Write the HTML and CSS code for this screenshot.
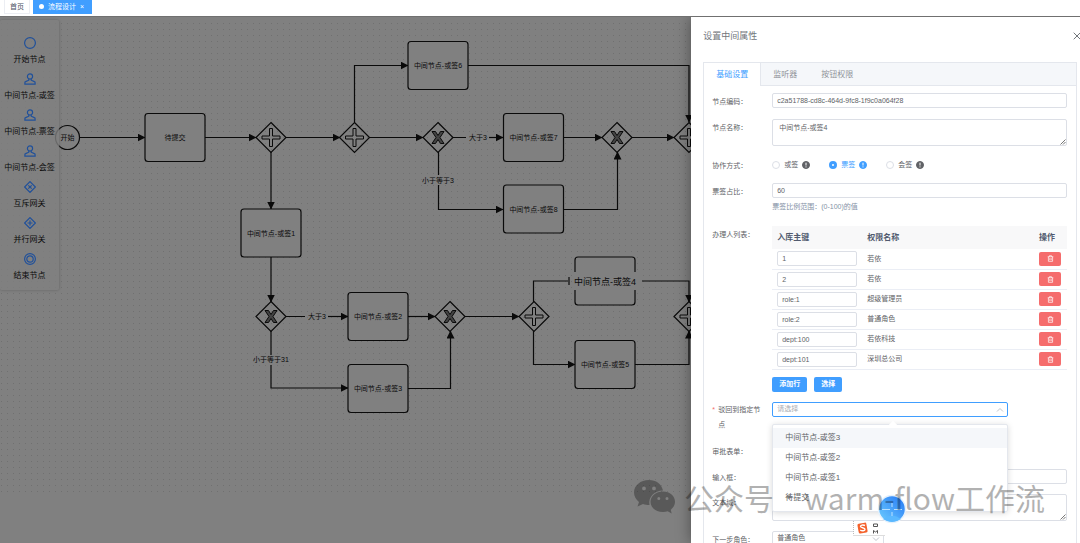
FILE: index.html
```html
<!DOCTYPE html>
<html lang="zh-CN">
<head>
<meta charset="utf-8">
<title>流程设计</title>
<link rel="stylesheet" href="styles.css">
</head>
<body>
<svg class="defs" width="0" height="0" aria-hidden="true">
  <defs>
    <symbol id="user" viewBox="0 0 12 12"><circle cx="6" cy="3.4" r="2.6"/><path d="M4.8 6v1.2L1.6 8.6a1 1 0 0 0-.7 1v1.6h10.200V9.600a1 1 0 0 0-.7-1L7.200 7.200V6"/></symbol>
    <symbol id="trash" viewBox="0 0 10 10"><path d="M1 2.500h8M3.500 2.500V1h3v1.500M2 2.500V9h6V2.500M4 4.500v2.800M6 4.500v2.800"/></symbol>
    <symbol id="grip" viewBox="0 0 6 6"><path d="M.5 5.500l5-5M3 5.500L5.500 3"/></symbol>
    <symbol id="chevron" viewBox="0 0 8 8"><path d="M1 2.500l3 3 3-3"/></symbol>
    <symbol id="info" viewBox="0 0 8 8"><circle cx="4" cy="4" r="3.500" fill="currentColor"/><path d="M4 1.700v2.800M4 5.400v1" stroke="#fff"/></symbol>
    <g id="plus"><path class="edge" d="M0-15L15 0 0 15-15 0z"/><path class="mark" d="M-1.500-9h3v7.500h7.500v3h-7.500V9h-3V1.500H-9v-3h7.500z"/></g>
    <g id="cross"><path class="edge" d="M0-15L15 0 0 15-15 0z"/><path class="mark solid" d="M-6-6h3.500L0-2 2.500-6H6L2 0l4 6H2.500L0 2l-2.500 4H-6l4-6z"/></g>
    <marker id="arrow" viewBox="0 0 8 8" refX="7.500" refY="4" markerWidth="8" markerHeight="8" markerUnits="userSpaceOnUse" orient="auto"><path d="M0 0l8 4-8 4z" fill="#0a0a0a" stroke="none"/></marker>
    <pattern id="dots" width="6" height="6" x="1" y="5" patternUnits="userSpaceOnUse"><rect width="1" height="1" fill="#707070" stroke="none"/></pattern>
    <linearGradient id="ball" x1="1" y1="0" x2="0" y2="1"><stop offset="0.200" stop-color="#3388f7"/><stop offset="1" stop-color="#6fd0ff"/></linearGradient>
  </defs>
</svg>

<nav class="tags">
  <a class="tag" href="#">首页</a>
  <a class="tag tag-active" href="#"><span class="dot"></span>流程设计<span class="tag-close">×</span></a>
</nav>

<main class="designer">
  <svg class="canvas" width="720" height="527" viewBox="0 16 720 527">
    <rect x="0" y="18" width="720" height="474" fill="url(#dots)"/>
    <g class="edge">
      <g marker-end="url(#arrow)">
        <path d="M80 137.500H145"/><path d="M205 137.500H256"/><path d="M286 137.500H340"/><path d="M370 137.500H423"/>
        <path d="M271 152V209"/><path d="M354.500 122V65.500H408"/><path d="M468 65.500H689V122"/>
        <path d="M489 137.500H503"/><path d="M438.500 185V209.500H503"/><path d="M563 137.500H602"/>
        <path d="M563 209.500H617.500V152"/><path d="M632 137.500H674"/><path d="M271 257V302"/>
        <path d="M328 316.500H348"/><path d="M271 365V388H348"/><path d="M408 316.500H435"/>
        <path d="M408 388.500H450.500V331"/><path d="M465 316.500H519"/><path d="M533.500 331V364.500H575"/>
        <path d="M635 364.500H689V331"/><path d="M642 281H689V302"/>
      </g>
      <path d="M453 137.500H466M438.500 152V175M286 316.500H305M271 331V355M533.500 302V281H568M569 277v8"/>
    </g>
    <g class="box">
      <circle cx="67.500" cy="137.500" r="12"/>
      <rect x="145" y="113.500" width="60" height="48" rx="3"/><rect x="408" y="41.500" width="60" height="48" rx="3"/>
      <rect x="503.500" y="113.500" width="60" height="48" rx="3"/><rect x="503.500" y="185" width="60" height="48" rx="3"/>
      <rect x="241" y="209" width="60" height="48" rx="3"/><rect x="348" y="292.500" width="60" height="48" rx="3"/>
      <rect x="348" y="364.500" width="60" height="48" rx="3"/><rect x="575" y="257" width="60" height="48" rx="3"/>
      <rect x="575" y="340.500" width="60" height="48" rx="3"/>
    </g>
    <use href="#plus" x="271" y="137.500"/><use href="#plus" x="354.500" y="137.500"/><use href="#cross" x="438" y="137.500"/>
    <use href="#cross" x="617" y="137.500"/><use href="#plus" x="689" y="137.500"/><use href="#cross" x="271" y="316.500"/>
    <use href="#cross" x="450" y="316.500"/><use href="#plus" x="534" y="316.500"/><use href="#plus" x="689" y="316.500"/>
    <rect x="572" y="272" width="69" height="18" fill="#808080"/>
    <g class="node-text">
      <text x="67.500" y="140">开始</text><text x="175" y="140">待提交</text><text x="438" y="68">中间节点-或签6</text>
      <text x="533.500" y="140">中间节点-或签7</text><text x="533.500" y="212">中间节点-或签8</text>
      <text x="271" y="236">中间节点-或签1</text><text x="378" y="319">中间节点-或签2</text>
      <text x="378" y="391">中间节点-或签3</text><text x="605" y="367">中间节点-或签5</text>
      <text x="478" y="140">大于3</text><text x="438" y="183">小于等于3</text><text x="317" y="319">大于3</text><text x="271" y="362">小于等于31</text>
      <text class="editing" x="605" y="285">中间节点-或签4</text>
    </g>
  </svg>

  <aside class="palette">
    <div class="shape"><svg viewBox="0 0 12 12"><circle cx="6" cy="6" r="5.400"/></svg>开始节点</div>
    <div class="shape"><svg><use href="#user"/></svg>中间节点-或签</div>
    <div class="shape"><svg><use href="#user"/></svg>中间节点-票签</div>
    <div class="shape"><svg><use href="#user"/></svg>中间节点-会签</div>
    <div class="shape"><svg viewBox="0 0 12 12"><path d="M6 .6L11.400 6 6 11.400.6 6zM4.300 4.300l3.400 3.400M7.700 4.300L4.300 7.700"/></svg>互斥网关</div>
    <div class="shape"><svg viewBox="0 0 12 12"><path d="M6 .6L11.400 6 6 11.400.6 6zM6 3.500v5M3.500 6h5"/></svg>并行网关</div>
    <div class="shape"><svg viewBox="0 0 12 12"><circle cx="6" cy="6" r="5.400"/><circle cx="6" cy="6" r="3.200"/></svg>结束节点</div>
  </aside>

  <section class="drawer">
    <header class="drawer-head">
      <h1>设置中间属性</h1>
      <button class="close" aria-label="关闭"><svg viewBox="0 0 8 8"><path d="M.7.7l6.600 6.600M7.300.7L.7 7.300"/></svg></button>
    </header>
    <div class="card">
      <div class="tabs">
        <button class="tab tab-active">基础设置</button><button class="tab">监听器</button><button class="tab">按钮权限</button>
      </div>
      <form class="form">
        <div class="row"><label for="code">节点编码：</label><div class="field"><input id="code" class="control" value="c2a51788-cd8c-464d-9fc8-1f9c0a064f28"></div></div>
        <div class="row"><label for="name">节点名称：</label><div class="field area"><textarea id="name" class="control">中间节点-或签4</textarea><svg class="grip"><use href="#grip"/></svg></div></div>
        <div class="row"><span class="label">协作方式：</span><div class="field radios">
          <label class="radio"><input type="radio" name="mode">或签<svg><use href="#info"/></svg></label>
          <label class="radio"><input type="radio" name="mode" checked>票签<svg><use href="#info"/></svg></label>
          <label class="radio"><input type="radio" name="mode">会签<svg><use href="#info"/></svg></label>
        </div></div>
        <div class="row"><label for="ratio">票签占比：</label><div class="field"><input id="ratio" class="control" value="60"><p class="hint">票签比例范围：(0-100)的值</p></div></div>
        <div class="row row-table"><span class="label">办理人列表：</span><div class="field">
          <table class="table">
            <thead><tr><th class="c-key">入库主键</th><th>权限名称</th><th class="c-op">操作</th></tr></thead>
            <tbody>
              <tr><td><input class="control" aria-label="入库主键" value="1"></td><td>若依</td><td><button type="button" class="del" aria-label="删除"><svg><use href="#trash"/></svg></button></td></tr>
              <tr><td><input class="control" aria-label="入库主键" value="2"></td><td>若依</td><td><button type="button" class="del" aria-label="删除"><svg><use href="#trash"/></svg></button></td></tr>
              <tr><td><input class="control" aria-label="入库主键" value="role:1"></td><td>超级管理员</td><td><button type="button" class="del" aria-label="删除"><svg><use href="#trash"/></svg></button></td></tr>
              <tr><td><input class="control" aria-label="入库主键" value="role:2"></td><td>普通角色</td><td><button type="button" class="del" aria-label="删除"><svg><use href="#trash"/></svg></button></td></tr>
              <tr><td><input class="control" aria-label="入库主键" value="dept:100"></td><td>若依科技</td><td><button type="button" class="del" aria-label="删除"><svg><use href="#trash"/></svg></button></td></tr>
              <tr><td><input class="control" aria-label="入库主键" value="dept:101"></td><td>深圳总公司</td><td><button type="button" class="del" aria-label="删除"><svg><use href="#trash"/></svg></button></td></tr>
            </tbody>
          </table>
          <div class="actions"><button type="button" class="btn">添加行</button><button type="button" class="btn">选择</button></div>
        </div></div>
        <div class="row row-tight row-back"><label class="required" for="back">驳回到指定节点</label><div class="field">
          <div class="select select-open">
            <select id="back" class="control"><option>请选择</option></select><svg class="chevron"><use href="#chevron"/></svg>
            <ul class="menu"><li class="hover">中间节点-或签3</li><li>中间节点-或签2</li><li>中间节点-或签1</li><li>待提交</li></ul>
          </div>
        </div></div>
        <div class="row"><span class="label">审批表单：</span></div>
        <div class="row"><label for="line">输入框：</label><div class="field"><input id="line" class="control"></div></div>
        <div class="row row-tight"><label for="text">文本域：</label><div class="field area"><textarea id="text" class="control"></textarea><svg class="grip"><use href="#grip"/></svg></div></div>
        <div class="row row-tight"><label for="next">下一步角色：</label><div class="field">
          <div class="select select-small"><select id="next" class="control"><option>普通角色</option></select><svg class="chevron"><use href="#chevron"/></svg></div>
        </div></div>
      </form>
    </div>
  </section>

  <svg class="ime" viewBox="0 0 34 15"><g stroke="none"><rect width="34" height="15" fill="#fff"/><rect x="5" y="2" width="9" height="10" rx="1.500" fill="#f4622c" transform="rotate(-10 10 7)"/></g><path d="M.5 0v14" stroke="#bbb" stroke-dasharray="1 1"/><path d="M0 14.500h32" stroke="#ddd"/><path d="M12 4.500c-2-1-4.500-.5-4.500 1s4.500 1 4.500 2.700-3 2-4.800.8" stroke="#fff" stroke-width="1.400"/><path d="M20.500 3h4v2.500h-4zM20.500 12.500V9.500l2 1.500 2-1.500v3" stroke="#555"/></svg>
  <svg class="ball" viewBox="0 0 30 30"><circle cx="15" cy="15" r="13.500" fill="url(#ball)" stroke="#e4f1fd" stroke-width="1.500"/><path d="M6 25q9-7 18 0-9 6-18 0z" fill="#5ab8ff" stroke="none"/><path d="M5 15.500h8M17 15.500h8M15 9v4M15 18v4" stroke="#b9e0ff"/></svg>

  <div class="watermark">
    <svg viewBox="0 0 42 34"><path fill-rule="evenodd" d="M15 0C6.500 0 0 5.500 0 12.500c0 4 2 7 5 9.500l-1.500 4.500L9 24c2 .7 4 1 6.500 1-1.500-8 5-14.500 13.500-14.500C27.500 4 22 0 15 0zM10 6.500a1.900 1.900 0 1 1 0 3.800 1.900 1.900 0 0 1 0-3.800zm10 0a1.900 1.900 0 1 1 0 3.800 1.900 1.900 0 0 1 0-3.800z"/><path fill-rule="evenodd" d="M29 11.500c-7 0-12.500 4.500-12.500 10.300S22 32 29 32c1.700 0 3.300-.2 4.700-.8l4 2.300-1-3.700c2.700-2 4.300-4.700 4.300-8 0-5.800-5-10.300-12-10.300zm-4.200 5.500a1.500 1.500 0 1 1 0 3 1.500 1.500 0 0 1 0-3zm8.200 0a1.500 1.500 0 1 1 0 3 1.500 1.500 0 0 1 0-3z"/></svg>
    <div class="account"><span>公众号</span><span class="sep">·</span><span>warm-flow工作流</span></div>
  </div>
</main>
</body>
</html>
```

FILE: styles.css
```css
* { box-sizing: border-box; }
body {
  margin: 0;
  height: 100vh;
  display: flex;
  flex-direction: column;
  overflow: hidden;
  background: #fff;
  color: #606266;
  font: 7px/10px "Liberation Sans", "Noto Sans CJK SC", sans-serif;
}
button, input, select, textarea { font: inherit; color: inherit; margin: 0; }
button { border: 0; padding: 0; background: none; }
svg { fill: none; stroke: currentColor; }
.defs { position: absolute; }

.tags { display: flex; gap: 3px; height: 16px; padding-left: 4px; }
.tag {
  display: flex;
  align-items: center;
  gap: 4px;
  height: 14px;
  padding: 0 5px;
  border: 1px solid #eceef3;
  border-top: 0;
  color: #495060;
  text-decoration: none;
}
.tag-active { padding: 0 7px 0 5px; border-color: #409eff; background: #409eff; color: #fff; }
.dot { width: 5px; height: 5px; border-radius: 50%; background: #fff; }

.designer { position: relative; flex: 1; overflow: hidden; border-top: 1px solid #707070; background: #808080; }
.canvas { display: block; margin-top: -1px; stroke: none; fill: #000; }
.edge { fill: none; stroke: #0a0a0a; stroke-width: 1.2; }
.box { fill: #808080; stroke: #0a0a0a; stroke-width: 1.2; }
.mark { fill: #808080; stroke: #0a0a0a; }
.solid { fill: #444; }
.node-text { fill: #0a0a0a; text-anchor: middle; font-size: 7px; }
.editing { font-size: 9px; }

.palette {
  position: absolute;
  top: 3px;
  left: 0;
  display: flex;
  flex-direction: column;
  gap: 7px;
  width: 59px;
  padding: 17px 0 8px;
  border-radius: 2px;
  background: rgba(128, 128, 128, 0.8);
  box-shadow: 0 0 3px #606060;
  color: #0a0a0a;
}
.shape { display: flex; flex-direction: column; align-items: center; gap: 5px; font-size: 8px; line-height: 12px; white-space: nowrap; }
.shape svg { width: 12px; height: 12px; color: #20509a; stroke-width: 1.2; }

.drawer {
  position: absolute;
  top: 0;
  right: 0;
  bottom: 0;
  width: 36%;
  overflow: hidden;
  padding-left: 12px;
  background: #fff;
  box-shadow: 0 0 14px rgba(0, 0, 0, 0.4);
}
.drawer-head { display: flex; justify-content: space-between; align-items: center; height: 38px; margin-bottom: 7px; color: #72767b; }
.drawer-head h1 { margin: 0; font-size: 9px; font-weight: 400; }
.close { width: 8px; height: 8px; margin-right: -1px; }
.close svg { display: block; width: 8px; height: 8px; }
.card { height: 100%; margin-right: 3px; border: 1px solid #e4e7ed; }
.tabs { display: flex; height: 23px; border-bottom: 1px solid #e4e7ed; background: #f5f7fa; }
.tab { height: 23px; padding: 0 12px; color: #909399; font-size: 8px; }
.tab-active { padding: 0 12px; background: #fff; border-right: 1px solid #e4e7ed; color: #409eff; }

.form { display: flex; flex-direction: column; gap: 11px; padding: 7px 9px 7px 8px; }
.row { display: grid; grid-template-columns: 60px 1fr; }
.row > label, .label { padding-top: 2px; line-height: 13px; }
.field { min-width: 0; }
.control {
  display: block;
  width: 100%;
  height: 15px;
  padding: 0 4px;
  border: 1px solid #dcdfe6;
  border-radius: 2px;
  background: #fff;
  outline: 0;
}
.area { position: relative; }
textarea.control { height: 27px; padding: 3px 6px; resize: none; }
.grip { position: absolute; right: 1px; bottom: 1px; width: 6px; height: 6px; color: #777; }
.radios { display: flex; gap: 19px; align-items: center; height: 15px; }
.radio { display: flex; align-items: center; gap: 4px; }
.radio input { appearance: none; width: 8px; height: 8px; border: 1px solid #dcdfe6; border-radius: 50%; }
.radio input:checked { border: 3px solid #409eff; }
.radio:has(input:checked) { color: #409eff; }
.radio svg { width: 8px; height: 8px; }
.hint { margin: 4px 0 0; color: #8492a6; }

.row-table { margin-top: 3px; }
.table { width: 100%; border-collapse: collapse; table-layout: fixed; text-align: left; }
.table th { height: 23px; padding: 0 5px; background: #f8f8f9; color: #515a6e; font-size: 8px; }
.table td { height: 20px; padding: 0 5px; border-bottom: 1px solid #ebeef5; }
.c-key { width: 90px; }
.c-op { width: 33px; }
.del { display: flex; align-items: center; justify-content: center; width: 22px; height: 14px; border-radius: 2px; background: #f56c6c; color: #fff; }
.del svg { width: 7px; height: 7px; }
.actions { display: flex; gap: 7px; margin-top: 7px; }
.btn { height: 15px; padding: 0 7px; border-radius: 2px; background: #409eff; color: #fff; font-weight: 700; }

.row-tight { margin-top: -1px; }
.row-back > .required { position: relative; padding: 0 8px 0 6px; line-height: 15px; }
.required::before { content: "*"; position: absolute; left: 0; color: #f56c6c; }
.select { position: relative; width: 80%; }
.select-small { width: 38%; }
.select select { appearance: none; }
.select-open > .control { border: 1px solid #409eff; color: #a8abb2; }
.chevron { position: absolute; top: 4px; right: 4px; width: 8px; height: 8px; color: #c0c4cc; }
.select-open .chevron { transform: rotate(180deg); }
.menu {
  position: absolute;
  z-index: 1;
  top: 22px;
  left: 0;
  width: 100%;
  margin: 0;
  padding: 3px 0;
  border: 1px solid #e4e7ed;
  border-radius: 2px;
  background: #fff;
  box-shadow: 0 1px 6px rgba(0, 0, 0, 0.15);
  list-style: none;
  font-size: 8px;
  line-height: 20px;
}
.menu::before { content: ""; position: absolute; top: -3px; left: 50%; width: 6px; height: 6px; background: #fff; transform: rotate(45deg); }
.menu li { padding: 0 12px; }
.menu .hover { position: relative; background: #f5f7fa; }

.ime { position: absolute; z-index: 2; right: 193px; bottom: 7px; width: 34px; height: 15px; }
.ball { position: absolute; z-index: 2; right: 173px; bottom: 19px; width: 30px; height: 30px; }
.watermark {
  position: absolute;
  z-index: 3;
  right: 35px;
  bottom: 26px;
  display: flex;
  align-items: center;
  gap: 8px;
  color: #000;
  opacity: 0.3;
  font: 30px/40px "Noto Sans CJK SC", sans-serif;
  white-space: nowrap;
}
.account { display: flex; gap: 11px; }
.sep { font-family: "Noto Sans", sans-serif; }
.watermark svg { width: 42px; height: 34px; fill: #000; stroke: none; }
```
